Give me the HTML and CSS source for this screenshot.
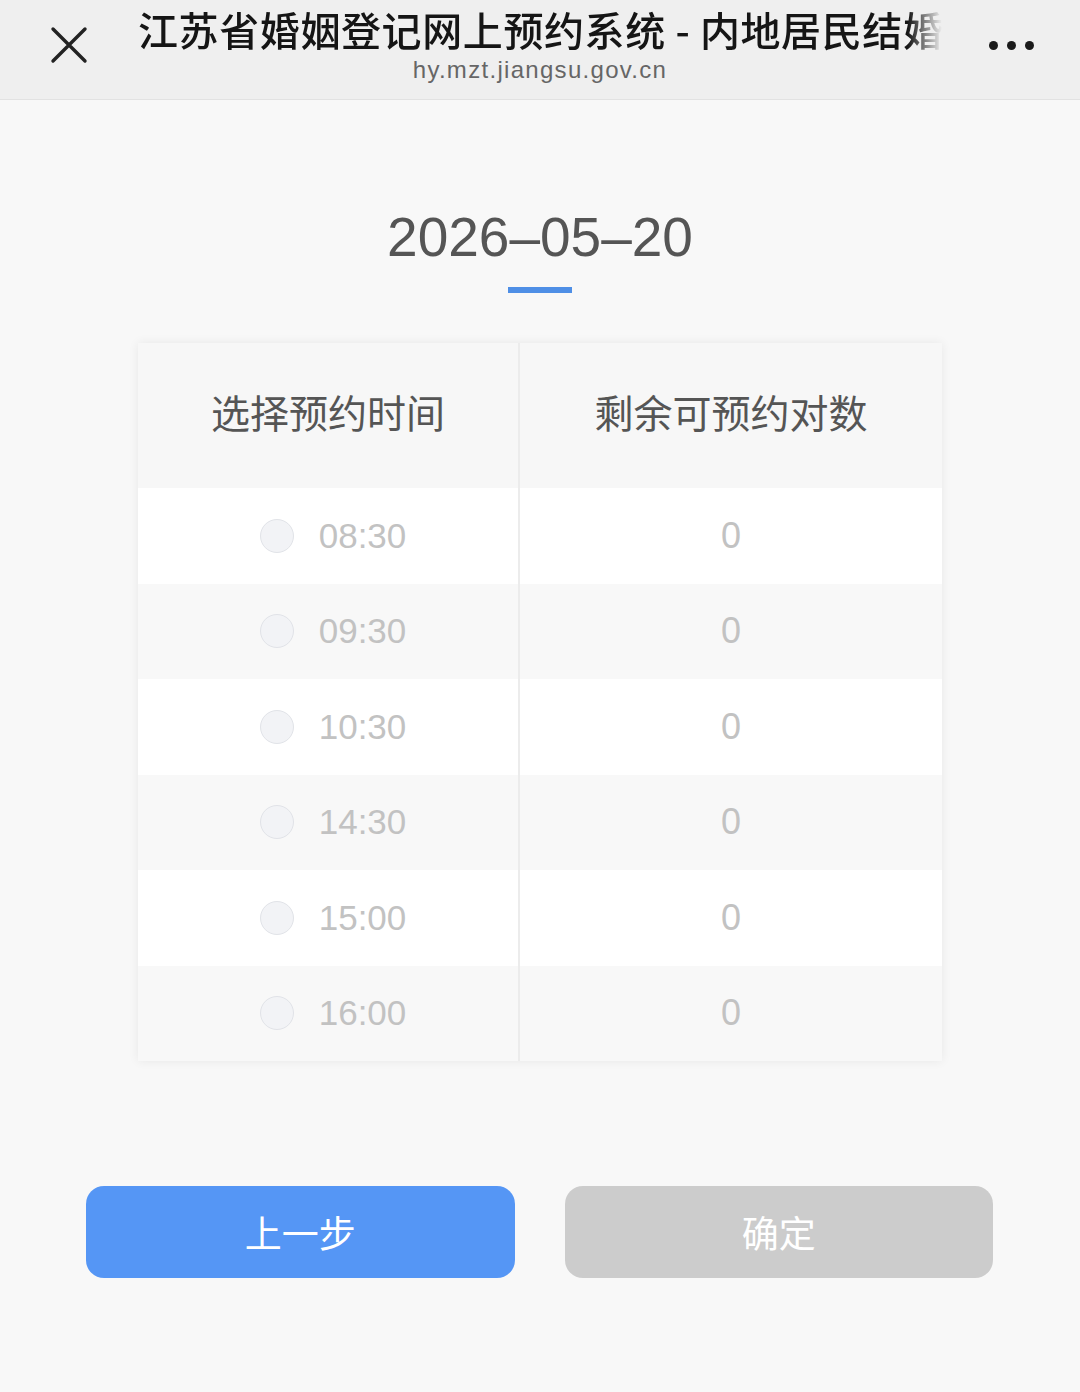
FILE: index.html
```html
<!DOCTYPE html>
<html lang="zh-CN">
<head>
<meta charset="utf-8">
<title>江苏省婚姻登记网上预约系统</title>
<link rel="stylesheet" href="styles.css">
</head>
<body>
<header class="topbar">
  <div class="close-btn">
    <svg width="40" height="40" viewBox="0 0 40 40"><path d="M4 4 L36 36 M36 4 L4 36" stroke="#222" stroke-width="3.4" stroke-linecap="round" fill="none"/></svg>
  </div>
  <div class="titles">
    <div class="title">江苏省婚姻登记网上预约系统 - 内地居民结婚登记</div>
    <div class="url">hy.mzt.jiangsu.gov.cn</div>
  </div>
  <div class="more">
    <span class="dot"></span><span class="dot"></span><span class="dot"></span>
  </div>
</header>

<main class="page">
  <div class="date">2026–05–20</div>
  <div class="date-bar"></div>

  <div class="table">
    <div class="row head">
      <div class="cell left">选择预约时间</div>
      <div class="cell right">剩余可预约对数</div>
    </div>
    <div class="row">
      <div class="cell left"><span class="radio"></span><span class="time">08:30</span></div>
      <div class="cell right num">0</div>
    </div>
    <div class="row alt">
      <div class="cell left"><span class="radio"></span><span class="time">09:30</span></div>
      <div class="cell right num">0</div>
    </div>
    <div class="row">
      <div class="cell left"><span class="radio"></span><span class="time">10:30</span></div>
      <div class="cell right num">0</div>
    </div>
    <div class="row alt">
      <div class="cell left"><span class="radio"></span><span class="time">14:30</span></div>
      <div class="cell right num">0</div>
    </div>
    <div class="row">
      <div class="cell left"><span class="radio"></span><span class="time">15:00</span></div>
      <div class="cell right num">0</div>
    </div>
    <div class="row alt">
      <div class="cell left"><span class="radio"></span><span class="time">16:00</span></div>
      <div class="cell right num">0</div>
    </div>
  </div>

  <div class="actions">
    <button class="btn primary">上一步</button>
    <button class="btn disabled">确定</button>
  </div>
</main>
</body>
</html>
```

FILE: styles.css
```css
* { box-sizing: border-box; }

html, body {
  margin: 0;
  padding: 0;
}

body {
  width: 1080px;
  min-height: 1392px;
  background: #f8f8f8;
  font-family: "Liberation Sans", "Noto Sans CJK SC", sans-serif;
  color: #333;
}

.topbar {
  height: 100px;
  background: #efefef;
  border-bottom: 1px solid #e2e2e2;
  display: flex;
  align-items: flex-start;
}

.close-btn {
  width: 138px;
  height: 100px;
  display: flex;
  align-items: center;
  padding-left: 49px;
  padding-bottom: 10px;
}

.titles {
  width: 804px;
  padding-top: 7px;
  display: flex;
  flex-direction: column;
  align-items: center;
}

.title {
  width: 100%;
  height: 44px;
  font-family: "Noto Sans CJK SC", sans-serif;
  font-size: 40px;
  letter-spacing: 0.6px;
  font-weight: 500;
  line-height: 44px;
  color: #151515;
  white-space: nowrap;
  overflow: hidden;
  -webkit-mask-image: linear-gradient(to right, #000 calc(100% - 34px), transparent);
  mask-image: linear-gradient(to right, #000 calc(100% - 34px), transparent);
}

.url {
  font-family: "Liberation Sans", sans-serif;
  font-size: 24px;
  letter-spacing: 1.3px;
  line-height: 26px;
  color: #666;
  margin-top: 6px;
}

.more {
  flex: 1;
  height: 90px;
  display: flex;
  align-items: center;
  justify-content: flex-start;
  padding-left: 47px;
  gap: 9px;
}

.dot {
  width: 9px;
  height: 9px;
  border-radius: 50%;
  background: #1a1a1a;
}

.page {
  display: flex;
  flex-direction: column;
  align-items: center;
}

.date {
  margin-top: 109px;
  font-size: 55px;
  line-height: 56px;
  color: #555;
}

.date-bar {
  margin-top: 22px;
  width: 64px;
  height: 6px;
  background: #4f8fe6;
}

.table {
  margin-top: 50px;
  width: 804px;
  background: #fff;
  box-shadow: 0 0 10px rgba(0, 0, 0, 0.07);
  display: flex;
  flex-direction: column;
}

.row {
  display: flex;
  height: 95.5px;
  background: #fff;
}

.row.alt {
  background: #f8f8f8;
}

.row.head {
  height: 145px;
  background: #f7f7f7;
}

.cell {
  display: flex;
  align-items: center;
  justify-content: center;
}

.cell.left {
  width: 382px;
  border-right: 2px solid #ececec;
}

.row:not(.head) .cell.left {
  padding-left: 10px;
}

.cell.right {
  flex: 1;
}

.row.head .cell {
  font-family: "Noto Sans CJK SC", sans-serif;
  font-size: 39px;
  color: #555;
  padding-bottom: 9px;
}

.radio {
  width: 34px;
  height: 34px;
  border-radius: 50%;
  background: #f2f3f6;
  border: 1.5px solid #e1e3e8;
  margin-right: 25px;
}

.time {
  font-size: 35px;
  color: #c2c2c2;
}

.num {
  font-size: 36px;
  color: #c2c2c2;
}

.actions {
  margin-top: 125px;
  width: 100%;
  padding: 0 87px 0 86px;
  display: flex;
  gap: 50px;
}

.btn {
  flex: 1;
  height: 92px;
  border: none;
  border-radius: 18px;
  font-family: "Noto Sans CJK SC", sans-serif;
  font-size: 37px;
  color: #fff;
  padding: 0;
}

.btn.primary {
  background: #5596f5;
}

.btn.disabled {
  background: #cccccc;
}
```
